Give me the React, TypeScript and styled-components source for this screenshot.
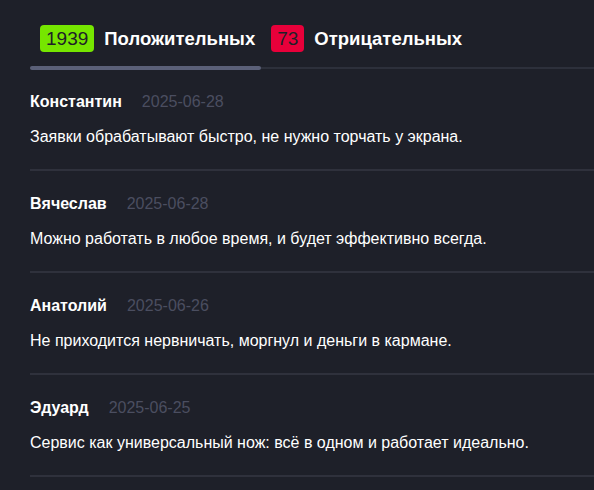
import styled, { createGlobalStyle } from 'styled-components'

const reviews = [
  { name: 'Константин', date: '2025-06-28', text: 'Заявки обрабатывают быстро, не нужно торчать у экрана.' },
  { name: 'Вячеслав', date: '2025-06-28', text: 'Можно работать в любое время, и будет эффективно всегда.' },
  { name: 'Анатолий', date: '2025-06-26', text: 'Не приходится нервничать, моргнул и деньги в кармане.' },
  { name: 'Эдуард', date: '2025-06-25', text: 'Сервис как универсальный нож: всё в одном и работает идеально.' },
]

const GlobalStyle = createGlobalStyle`
  html, body {
    margin: 0;
    padding: 0;
    background: #1e2029;
    font-family: "Liberation Sans", Arial, sans-serif;
  }
`

const Page = styled.div`
  padding: 25px 0 0 30px;
  overflow: hidden;
  height: 490px;
  box-sizing: border-box;
`

const TabBar = styled.div`
  display: flex;
  border-bottom: 2px solid #2d303b;
`

const Tab = styled.div<{ $active?: boolean }>`
  position: relative;
  display: flex;
  align-items: center;
  gap: 10px;
  padding: 0 6px 15px 10px;
  color: #ffffff;
  font-size: 18.5px;
  font-weight: 700;

  &::after {
    content: '';
    position: absolute;
    left: 0;
    right: 0;
    bottom: -3px;
    height: 4px;
    border-radius: 2px;
    background: ${({ $active }) => ($active ? '#5b6078' : 'transparent')};
  }
`

const Badge = styled.span<{ $color: string }>`
  display: inline-flex;
  align-items: center;
  justify-content: center;
  height: 27px;
  padding: 0 6px;
  border-radius: 4px;
  background: ${({ $color }) => $color};
  color: #1e2029;
  font-size: 19px;
  font-weight: 400;
`

const Review = styled.div`
  padding: 24px 0 0;
  height: 102px;
  box-sizing: border-box;
  border-bottom: 2px solid #2f313c;
`

const Head = styled.div`
  display: flex;
  align-items: baseline;
  gap: 20px;
  margin-bottom: 17px;
`

const Name = styled.span`
  color: #ffffff;
  font-size: 16px;
  font-weight: 700;
`

const DateText = styled.span`
  color: #4b4e60;
  font-size: 16px;
`

const Text = styled.p`
  margin: 0;
  color: #ffffff;
  font-size: 16px;
`

export default function App() {
  return (
    <>
      <GlobalStyle />
      <Page>
        <TabBar>
          <Tab $active>
            <Badge $color="#76e600">1939</Badge>
            Положительных
          </Tab>
          <Tab>
            <Badge $color="#e8003a">73</Badge>
            Отрицательных
          </Tab>
        </TabBar>
        {reviews.map((r) => (
          <Review key={r.name}>
            <Head>
              <Name>{r.name}</Name>
              <DateText>{r.date}</DateText>
            </Head>
            <Text>{r.text}</Text>
          </Review>
        ))}
      </Page>
    </>
  )
}
